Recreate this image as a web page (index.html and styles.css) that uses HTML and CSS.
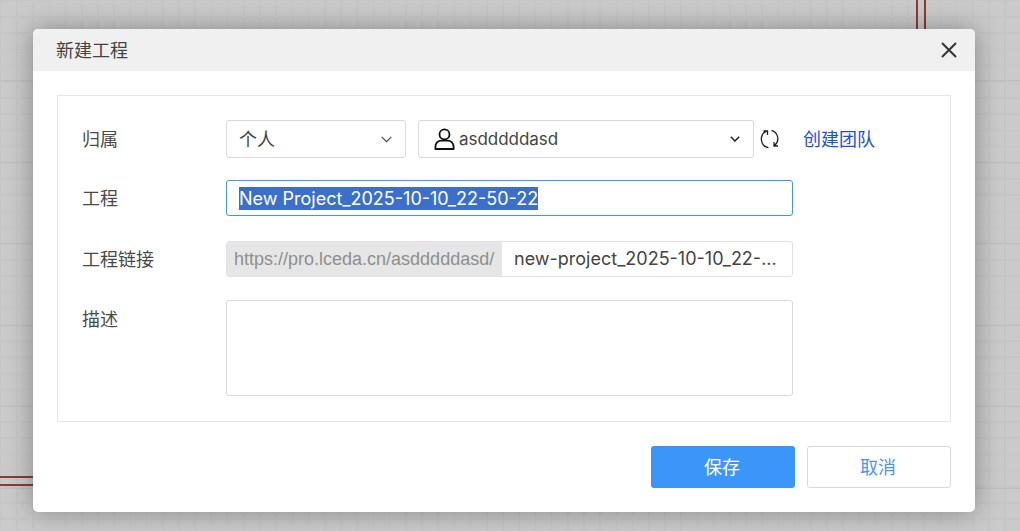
FILE: index.html
```html
<!DOCTYPE html>
<html lang="zh-CN">
<head>
<meta charset="utf-8">
<title>新建工程</title>
<link rel="stylesheet" href="styles.css">
</head>
<body>
<div class="wire wire-v wire-v1"></div>
<div class="wire wire-v wire-v2"></div>
<div class="wire wire-h wire-h1"></div>
<div class="wire wire-h wire-h2"></div>
<div class="dialog">
  <header class="dialog-head">
    <span class="dialog-title">新建工程</span>
    <svg class="close" width="16" height="16" viewBox="0 0 16 16"><path d="M1 1 15 15M15 1 1 15" fill="none" stroke="#333" stroke-width="2"/></svg>
  </header>
  <div class="dialog-body">
    <div class="panel">
      <div class="row row-owner">
        <label class="label">归属</label>
        <div class="select select-type">
          <span class="select-text">个人</span>
          <svg class="chev" width="11" height="7" viewBox="0 0 11 7"><path d="M.7.9 5.500 5.700 10.300.9" fill="none" stroke="#444" stroke-width="1.100"/></svg>
        </div>
        <div class="select select-user">
          <svg class="user" width="21" height="22" viewBox="0 0 21 22"><circle cx="10.500" cy="6.400" r="5" fill="none" stroke="#111" stroke-width="1.800"/><path d="M1.400 21v-2.200c0-4 3.200-6.200 5.600-6.200h7c2.400 0 5.600 2.200 5.600 6.200V21Z" fill="none" stroke="#111" stroke-width="1.800" stroke-linejoin="round"/></svg>
          <span class="user-name">asdddddasd</span>
          <svg class="chev" width="10" height="6" viewBox="0 0 10 6"><path d="M.8.8 5 5 9.200.8" fill="none" stroke="#222" stroke-width="1.500"/></svg>
        </div>
        <svg class="refresh" width="20" height="20" viewBox="0 0 20 20"><path d="M8.500 18.700A8.700 8.700 0 0 1 6.500 2.200M11.500 1.300A8.700 8.700 0 0 1 14.500 16.500M3.500 2H7.500V6M18 17H14V13" fill="none" stroke="#222" stroke-width="1.300"/></svg>
        <a class="team-link">创建团队</a>
      </div>
      <div class="row row-name">
        <label class="label">工程</label>
        <div class="input"><span class="selected">New Project_2025-10-10_22-50-22</span></div>
      </div>
      <div class="row row-url">
        <label class="label">工程链接</label>
        <div class="url-group">
          <span class="url-prefix">https://pro.lceda.cn/asdddddasd/</span>
          <span class="url-slug">new-project_2025-10-10_22-...</span>
        </div>
      </div>
      <div class="row row-desc">
        <label class="label label-desc">描述</label>
        <div class="textarea"></div>
      </div>
    </div>
    <div class="actions">
      <button class="btn btn-primary">保存</button>
      <button class="btn btn-ghost">取消</button>
    </div>
  </div>
</div>
</body>
</html>
```
FILE: styles.css
```css
* { box-sizing: border-box; }
html, body { margin: 0; height: 100%; }
body {
  position: relative;
  overflow: hidden;
  padding: 29px 0 0 33px;
  font-family: Inter, "Noto Sans CJK SC", sans-serif;
  font-size: 18px;
  color: #333;
  background-color: #cacaca;
  background-image:
    repeating-linear-gradient(180deg, transparent 0 80px, #bfbfbf 80px 81.500px, transparent 81.500px 81px),
    repeating-linear-gradient(90deg, #c6c6c6 0 1.500px, transparent 1.500px 16.200px),
    repeating-linear-gradient(180deg, #c6c6c6 0 1.500px, transparent 1.500px 16.200px);
}
.wire { position: absolute; background: #8f3a32; }
.wire-v { top: 0; width: 2px; height: 29px; }
.wire-v1 { left: 916px; }
.wire-v2 { left: 924px; }
.wire-h { left: 0; width: 33px; height: 2px; }
.wire-h1 { top: 476px; }
.wire-h2 { top: 484px; }

.dialog {
  position: relative;
  width: 942px;
  height: 483px;
  background: #fff;
  border-radius: 5px;
  box-shadow: 0 0 26px rgba(0, 0, 0, .34);
  overflow: hidden;
}
.dialog-head {
  display: flex;
  align-items: center;
  justify-content: space-between;
  height: 42px;
  padding: 0 18px 0 23px;
  background: #f0f0f0;
}
.dialog-title {
  padding-bottom: 3px;
  font-family: "Noto Sans CJK SC", sans-serif;
  color: #444;
}
.close { display: block; }
.dialog-body { padding: 24px 24px 0; }
.panel {
  height: 327px;
  padding: 24px 24px 0;
  border: 1px solid #e6e6e6;
}
.row { display: flex; align-items: center; }
.row-owner { height: 38px; margin-bottom: 22px; }
.row-name { height: 36px; margin-bottom: 25px; }
.row-url { height: 36px; margin-bottom: 23px; }
.row-desc { height: 96px; align-items: flex-start; }
.label {
  flex: 0 0 144px;
  padding-bottom: 2px;
  font-family: "Noto Sans CJK SC", sans-serif;
  color: #4a4a4a;
}
.label-desc { line-height: 36px; }
.select {
  display: flex;
  align-items: center;
  height: 38px;
  border: 1px solid #d9d9de;
  border-radius: 3px;
}
.select-type { width: 180px; padding: 0 13px 0 12px; justify-content: space-between; }
.select-text { padding-bottom: 2px; font-family: "Noto Sans CJK SC", sans-serif; color: #444; }
.select-user { width: 336px; margin-left: 12px; padding: 0 13px 0 15px; }
.user { flex: none; margin-right: 4px; }
.user-name { flex: 1; color: #444; font-size: 17px; padding-bottom: 1px; letter-spacing: -.03px; }
.refresh { flex: none; margin-left: 6px; }
.team-link {
  margin-left: 23px;
  padding-bottom: 2px;
  font-family: "Noto Sans CJK SC", sans-serif;
  color: #1c4fe0;
}
.input {
  width: 567px;
  height: 36px;
  display: flex;
  align-items: center;
  padding: 0 12px;
  border: 1px solid #3e95f9;
  border-radius: 3px;
}
.selected { background: #3b6fc9; color: #fff; line-height: 23px; white-space: nowrap; }
.url-group {
  width: 567px;
  height: 36px;
  display: flex;
  border: 1px solid #dfe1e6;
  border-radius: 3px;
  overflow: hidden;
}
.url-prefix {
  flex: 0 0 275px;
  padding-left: 7px;
  line-height: 34px;
  background: #e6e6e6;
  color: #8f8f8f;
  font-family: "Liberation Sans", sans-serif;
  white-space: nowrap;
}
.url-slug { flex: 1; padding-left: 12px; line-height: 34px; color: #444; white-space: nowrap; overflow: hidden; }
.textarea {
  width: 567px;
  height: 96px;
  border: 1px solid #d9d9d9;
  border-radius: 3px;
}
.actions { display: flex; justify-content: flex-end; gap: 12px; margin-top: 24px; }
.btn {
  width: 144px;
  height: 42px;
  padding: 0 2px 3px 0;
  border-radius: 3px;
  font-family: "Noto Sans CJK SC", sans-serif;
  font-size: 18px;
}
.btn-primary { background: #3c96f9; border: 0; color: #fff; }
.btn-ghost { background: #fff; border: 1px solid #d9d9d9; color: #4a97f0; }
```
